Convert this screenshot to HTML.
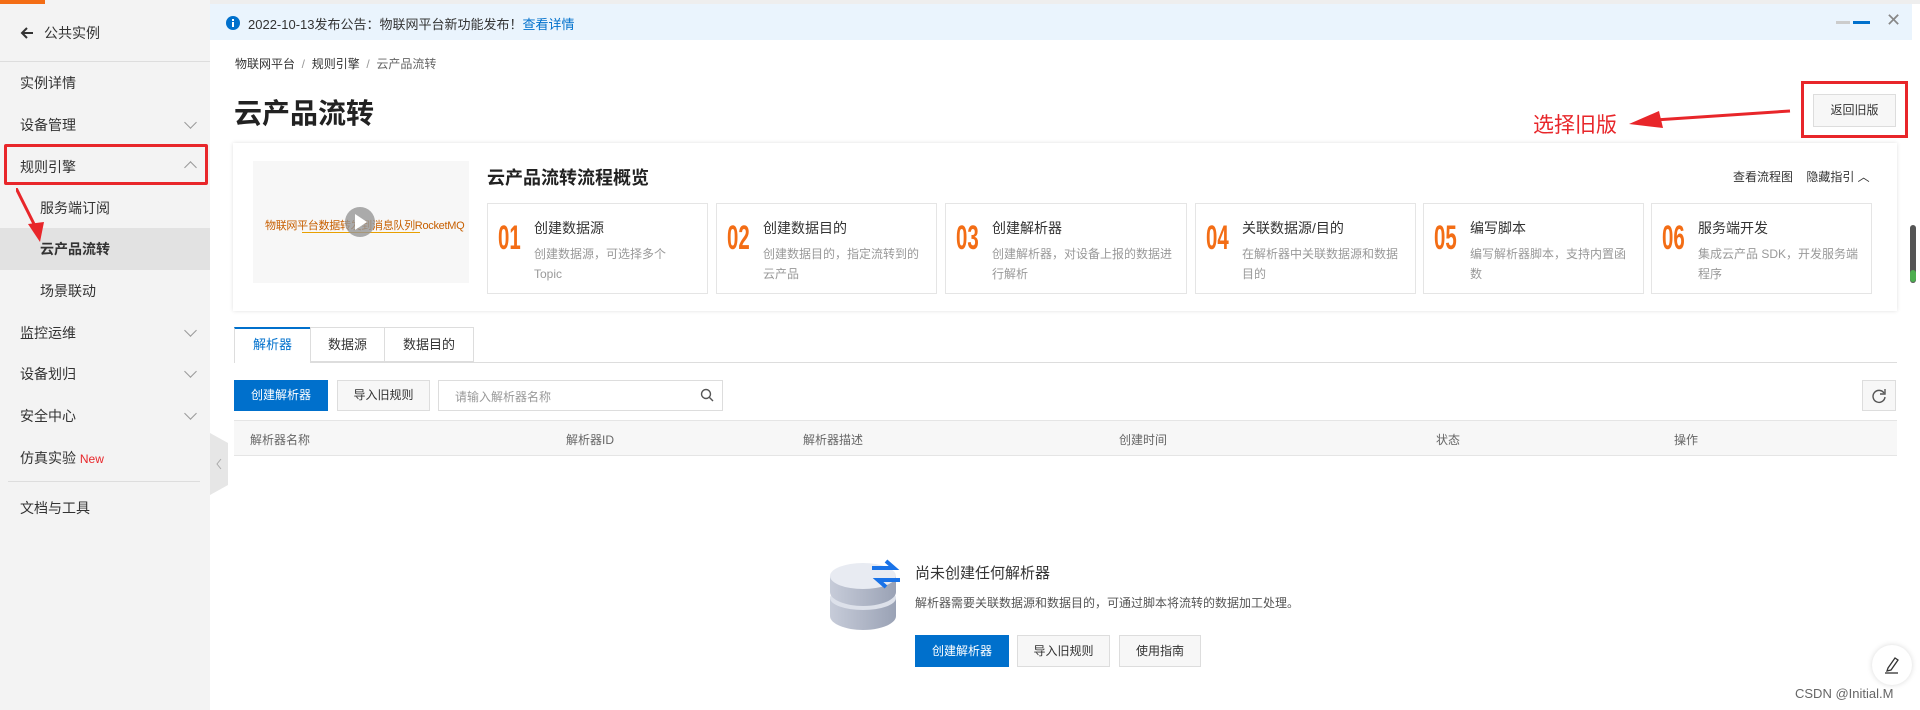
<!DOCTYPE html>
<html><head><meta charset="utf-8"><style>
*{box-sizing:border-box;margin:0;padding:0}
body{width:1920px;height:710px;overflow:hidden;background:#fff;font-family:"Liberation Sans","Noto Sans CJK SC",sans-serif;color:#333;position:relative;font-size:12px}
.a{position:absolute;white-space:nowrap}
#side{position:absolute;left:0;top:0;width:210px;height:710px;background:#f3f3f3}
.si{position:absolute;left:20px;font-size:14px;color:#333;line-height:20px}
.chev{position:absolute;left:186px;width:9px;height:9px;border-right:1.3px solid #999;border-bottom:1.3px solid #999;transform:rotate(45deg)}
.chevu{transform:rotate(-135deg)}
.btn{position:absolute;height:32px;line-height:30px;text-align:center;font-size:12px;border:1px solid #ddd;background:#f7f7f7;color:#333}
.bb{background:#0070cc;border-color:#0070cc;color:#fff}
.card{position:absolute;top:203px;height:91px;width:221px;border:1px solid #e5e5e5;background:#fff}
.card .n{position:absolute;left:10px;top:14px;font-size:34px;color:#f36d15;font-weight:bold;transform:scaleX(.6);transform-origin:left;line-height:40px}
.card .t{position:absolute;left:46px;top:14px;font-size:14px;color:#333}
.card .d{position:absolute;left:46px;top:40px;font-size:12px;color:#999;line-height:20px;width:165px;white-space:normal}
</style></head><body>
<div class="a" style="left:0;top:0;width:1920px;height:4px;background:#eee"></div>
<div id="side">
<div class="a" style="left:0;top:0;width:45px;height:4px;background:#f36d15"></div>
<svg class="a" style="left:20px;top:26px" width="14" height="14" viewBox="0 0 14 14"><path d="M13 7H2M7 2L2 7l5 5" stroke="#333" stroke-width="2" fill="none"/></svg>
<div class="si" style="left:44px;top:23px">公共实例</div>
<div class="a" style="left:0;top:61px;width:210px;height:1px;background:#ddd"></div>
<div class="si" style="top:73px">实例详情</div>
<div class="si" style="top:115px">设备管理</div><div class="chev" style="top:118px"></div>
<div class="si" style="top:157px">规则引擎</div><div class="chev chevu" style="top:163px"></div>
<div class="a" style="left:4px;top:144px;width:204px;height:41px;border:3px solid #e8262a;border-radius:2px"></div>
<div class="si" style="left:40px;top:198px">服务端订阅</div>
<div class="a" style="left:0;top:228px;width:210px;height:42px;background:#e2e2e2"></div>
<div class="si" style="left:40px;top:239px;font-weight:bold">云产品流转</div>
<div class="si" style="left:40px;top:281px">场景联动</div>
<div class="si" style="top:323px">监控运维</div><div class="chev" style="top:326px"></div>
<div class="si" style="top:364px">设备划归</div><div class="chev" style="top:367px"></div>
<div class="si" style="top:406px">安全中心</div><div class="chev" style="top:409px"></div>
<div class="si" style="top:448px">仿真实验 <span style="color:#e8262a;font-size:12px">New</span></div>
<div class="a" style="left:8px;top:481px;width:192px;height:1px;background:#ddd"></div>
<div class="si" style="top:498px">文档与工具</div>
<svg class="a" style="left:16px;top:188px" width="32" height="56" viewBox="0 0 32 56"><path d="M0 0L20 40" stroke="#e8262a" stroke-width="3"/><path d="M12 36L28 34L24 54Z" fill="#e8262a"/></svg>
</div>
<svg class="a" style="left:210px;top:433px" width="18" height="62"><path d="M0 0L18 10V52L0 62Z" fill="#e6e6e6"/><path d="M11 26L7 31L11 36" stroke="#aaa" fill="none"/></svg>
<div class="a" style="left:210px;top:4px;width:1702px;height:36px;background:#eaf4fd"></div>
<svg class="a" style="left:226px;top:16px" width="14" height="14"><circle cx="7" cy="7" r="7" fill="#0070cc"/><rect x="6" y="6" width="2" height="5" fill="#fff"/><rect x="6" y="3" width="2" height="2" fill="#fff"/></svg>
<div class="a" style="left:248px;top:14px;font-size:13px;color:#333">2022-10-13发布公告：物联网平台新功能发布！<span style="color:#0070cc">查看详情</span></div>
<div class="a" style="left:1836px;top:21px;width:14px;height:3px;background:#ccc"></div>
<div class="a" style="left:1853px;top:21px;width:17px;height:3px;background:#0070cc"></div>
<div class="a" style="left:1886px;top:10px;font-size:18px;color:#888">✕</div>
<div class="a" style="left:235px;top:55px;font-size:12px;color:#333">物联网平台 <span style="color:#999">&nbsp;/&nbsp;</span> 规则引擎 <span style="color:#999">&nbsp;/&nbsp;</span> <span style="color:#666">云产品流转</span></div>
<div class="a" style="left:234px;top:92px;font-size:28px;font-weight:bold;color:#222">云产品流转</div>
<div class="a" style="left:1533px;top:109px;font-size:21px;color:#e8262a">选择旧版</div>
<svg class="a" style="left:1625px;top:105px" width="170" height="30"><path d="M165 6L30 15" stroke="#e8262a" stroke-width="3"/><path d="M4 19L34 6L38 23Z" fill="#e8262a"/></svg>
<div class="a" style="left:1801px;top:81px;width:107px;height:57px;border:3px solid #e8262a"></div>
<div class="btn" style="left:1813px;top:94px;width:83px;height:33px;line-height:31px">返回旧版</div>
<div class="a" style="left:233px;top:143px;width:1664px;height:168px;background:#fff;box-shadow:0 0 4px rgba(0,0,0,.12)"></div>
<div class="a" style="left:253px;top:161px;width:216px;height:122px;background:#f7f7f7"></div>
<div class="a" style="left:265px;top:217px;font-size:11px;color:#c75f00;letter-spacing:-0.3px">物联网平台数据转发到消息队列RocketMQ</div>
<div class="a" style="left:302px;top:232px;width:118px;height:1px;background:#e8a000"></div>
<div class="a" style="left:345px;top:207px;width:30px;height:30px;border-radius:50%;background:rgba(150,150,150,.8)"></div>
<svg class="a" style="left:355px;top:214px" width="14" height="16"><path d="M0 0L12 8L0 16Z" fill="#fff"/></svg>
<div class="a" style="left:487px;top:164px;font-size:18px;font-weight:bold;color:#222">云产品流转流程概览</div>
<div class="a" style="left:1733px;top:168px;font-size:12px;color:#333">查看流程图 &nbsp;&nbsp; 隐藏指引 ︿</div>
<div class="card" style="left:487px"><div class="n">01</div><div class="t">创建数据源</div><div class="d" style="width:140px">创建数据源，可选择多个 Topic</div></div>
<div class="card" style="left:716px"><div class="n">02</div><div class="t">创建数据目的</div><div class="d">创建数据目的，指定流转到的云产品</div></div>
<div class="card" style="left:945px;width:242px"><div class="n">03</div><div class="t">创建解析器</div><div class="d" style="width:190px">创建解析器，对设备上报的数据进行解析</div></div>
<div class="card" style="left:1195px"><div class="n">04</div><div class="t">关联数据源/目的</div><div class="d">在解析器中关联数据源和数据目的</div></div>
<div class="card" style="left:1423px"><div class="n">05</div><div class="t">编写脚本</div><div class="d">编写解析器脚本，支持内置函数</div></div>
<div class="card" style="left:1651px"><div class="n">06</div><div class="t">服务端开发</div><div class="d">集成云产品 SDK，开发服务端程序</div></div>
<div class="a" style="left:234px;top:362px;width:1663px;height:1px;background:#ddd"></div>
<div class="a" style="left:234px;top:327px;width:77px;height:36px;background:#fff;border:1px solid #ddd;border-bottom:none;border-top:2px solid #0070cc;text-align:center;line-height:32px;font-size:13px;color:#0070cc">解析器</div>
<div class="a" style="left:310px;top:327px;width:75px;height:35px;border:1px solid #ddd;text-align:center;line-height:33px;font-size:13px">数据源</div>
<div class="a" style="left:384px;top:327px;width:90px;height:35px;border:1px solid #ddd;text-align:center;line-height:33px;font-size:13px">数据目的</div>
<div class="btn bb" style="left:234px;top:380px;width:94px;height:31px;line-height:29px">创建解析器</div>
<div class="btn" style="left:337px;top:380px;width:93px;height:31px;line-height:29px">导入旧规则</div>
<div class="a" style="left:438px;top:380px;width:285px;height:31px;border:1px solid #ddd;background:#fff"></div>
<div class="a" style="left:455px;top:388px;font-size:12px;color:#999">请输入解析器名称</div>
<svg class="a" style="left:700px;top:388px" width="14" height="14"><circle cx="6" cy="6" r="4.5" stroke="#555" stroke-width="1.4" fill="none"/><path d="M9.5 9.5L13 13" stroke="#555" stroke-width="1.4"/></svg>
<div class="btn" style="left:1862px;top:380px;width:34px;height:31px"></div>
<svg class="a" style="left:1871px;top:388px" width="16" height="16"><path d="M13 5A6 6 0 1 0 14 9" stroke="#555" stroke-width="1.4" fill="none"/><path d="M14 1V6H9" stroke="#555" stroke-width="1.4" fill="none"/></svg>
<div class="a" style="left:234px;top:420px;width:1663px;height:36px;background:#f7f7f7;border-top:1px solid #e5e5e5;border-bottom:1px solid #e5e5e5"></div>
<div class="a" style="left:250px;top:431px;color:#666">解析器名称</div>
<div class="a" style="left:566px;top:431px;color:#666">解析器ID</div>
<div class="a" style="left:803px;top:431px;color:#666">解析器描述</div>
<div class="a" style="left:1119px;top:431px;color:#666">创建时间</div>
<div class="a" style="left:1436px;top:431px;color:#666">状态</div>
<div class="a" style="left:1674px;top:431px;color:#666">操作</div>
<svg class="a" style="left:826px;top:558px" width="80" height="76" viewBox="0 0 80 76"><defs><linearGradient id="g" x1="0" x2="1"><stop offset="0" stop-color="#c7ccd9"/><stop offset="1" stop-color="#9aa2b5"/></linearGradient></defs>
<path d="M4 40v18c0 8 16 14 33 14s33-6 33-14V40z" fill="url(#g)"/><ellipse cx="37" cy="40" rx="33" ry="12" fill="#dde1ea"/>
<path d="M4 18v16c0 8 16 14 33 14s33-6 33-14V18z" fill="url(#g)"/><ellipse cx="37" cy="18" rx="33" ry="13" fill="#e8ebf2"/>
<path d="M46 10h22l-8-7" stroke="#1a73e8" stroke-width="4" fill="none"/><path d="M74 22H52l8 7" stroke="#1a73e8" stroke-width="4" fill="none"/></svg>
<div class="a" style="left:915px;top:562px;font-size:15px;color:#333">尚未创建任何解析器</div>
<div class="a" style="left:915px;top:594px;font-size:12px;color:#555">解析器需要关联数据源和数据目的，可通过脚本将流转的数据加工处理。</div>
<div class="btn bb" style="left:915px;top:635px;width:94px">创建解析器</div>
<div class="btn" style="left:1017px;top:635px;width:93px">导入旧规则</div>
<div class="btn" style="left:1119px;top:635px;width:82px">使用指南</div>
<div class="a" style="left:1872px;top:645px;width:40px;height:40px;border-radius:50%;background:#fff;box-shadow:0 0 6px rgba(0,0,0,.15)"></div>
<svg class="a" style="left:1884px;top:656px" width="16" height="18"><path d="M4 12L11 2L14 4L7 14L3 15Z" stroke="#333" stroke-width="1.3" fill="none"/><path d="M1 17H14" stroke="#333" stroke-width="1.3"/></svg>
<div class="a" style="left:1795px;top:686px;font-size:13px;color:#666">CSDN @Initial.M</div>
<div class="a" style="left:1910px;top:225px;width:6px;height:58px;border-radius:3px;background:#555"></div>
<div class="a" style="left:1910px;top:270px;width:6px;height:12px;border-radius:3px;background:#4caf50"></div>
</body></html>
